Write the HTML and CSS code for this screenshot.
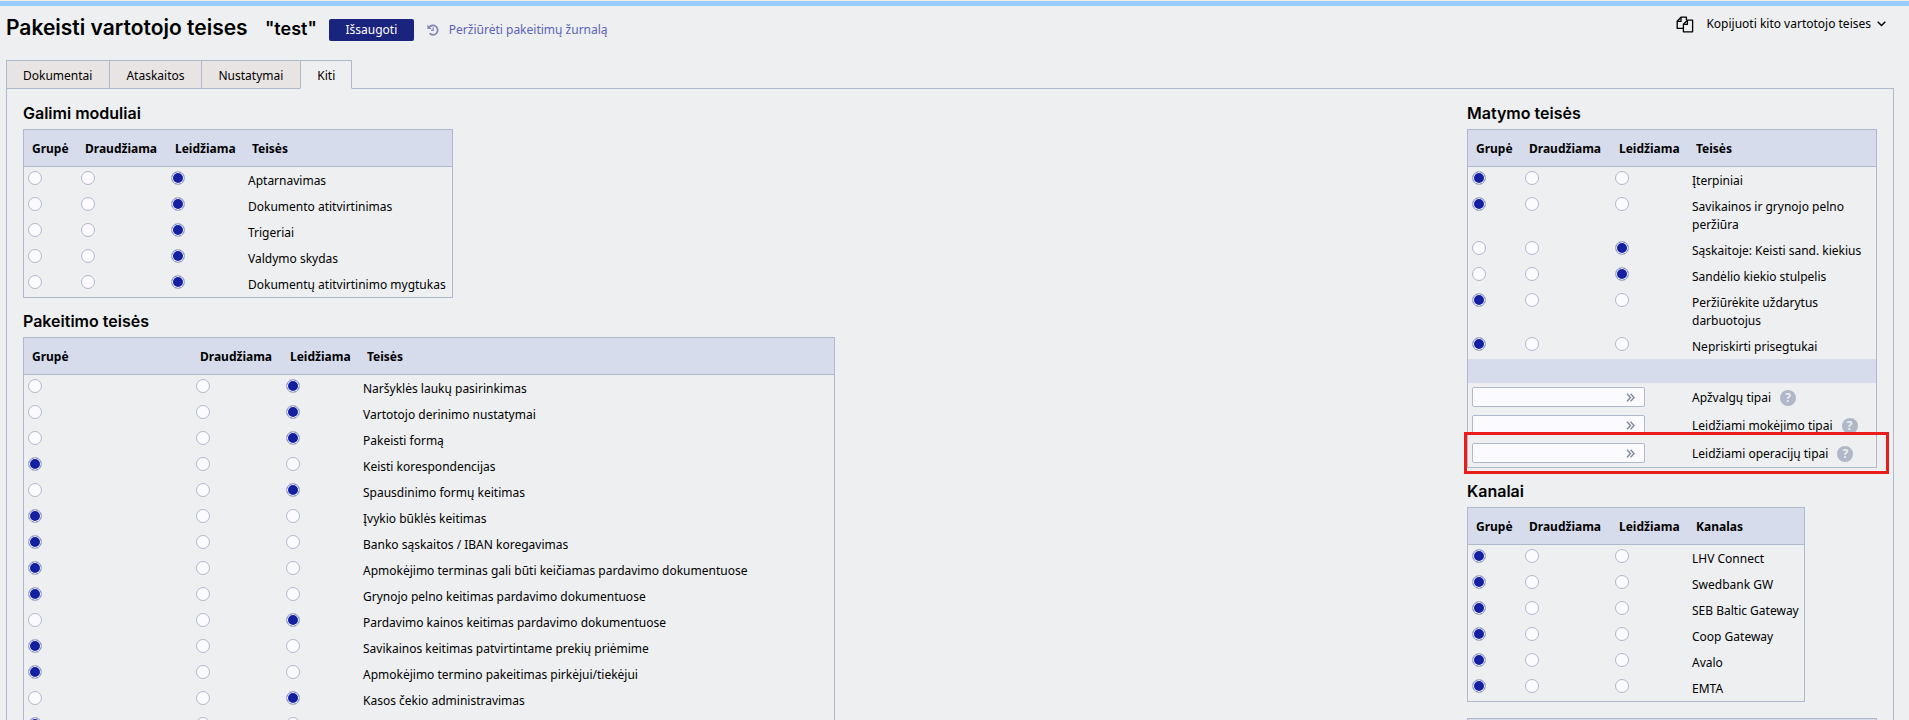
FILE: index.html
```html
<!DOCTYPE html>
<html lang="lt">

<head>
    <meta charset="UTF-8">
    <meta name="viewport" content="width=device-width, initial-scale=1.0">
    <title>Pakeisti vartotojo teises</title>
    <link rel="stylesheet" href="styles.css">
</head>

<body>
    <header class="pageHeader">
        <h1 class="pageTitle">Pakeisti vartotojo teises <span class="userName">"test"</span></h1>
        <button class="saveButton" type="button">Išsaugoti</button>
        <a class="logLink" href="#">
            <svg class="historyIcon" viewBox="0 0 12 12" width="12" height="12" aria-hidden="true">
                <path d="M2 3.6A4.7 4.7 0 1 1 2.6 9.4" fill="none" stroke="currentColor" stroke-width="1.8" />
                <path d="M0.4 0.8V5h4.2z" fill="currentColor" />
                <path d="M6.2 3.4v3h-2.2" fill="none" stroke="currentColor" stroke-width="1.3" />
            </svg>
            Peržiūrėti pakeitimų žurnalą
        </a>
        <button class="copyButton" type="button">
            <svg class="copyIcon" viewBox="0 0 18 17" width="18" height="17" aria-hidden="true">
                <g fill="none" stroke="currentColor" stroke-width="1.3" stroke-linejoin="round">
                    <path d="M7.4 12.4H1.2V5.2L5 1.2h5.4V4" />
                    <path d="M1.2 5.4H5V1.2" />
                    <path d="M7.4 8.2l4-4h5.2v11.6H7.4z" />
                    <path d="M7.4 8.4h4V4.2" />
                </g>
            </svg>
            Kopijuoti kito vartotojo teises
            <svg class="chevronIcon" viewBox="0 0 9 6" width="9" height="6" aria-hidden="true">
                <path d="M0.7 0.8l3.8 3.8 3.8-3.8" fill="none" stroke="currentColor" stroke-width="1.4" />
            </svg>
        </button>
    </header>

    <nav class="tabs">
        <a class="tab" href="#">Dokumentai</a>
        <a class="tab" href="#">Ataskaitos</a>
        <a class="tab" href="#">Nustatymai</a>
        <a class="tab active" href="#">Kiti</a>
    </nav>

    <main class="panel">
        <div class="column">
            <h2 class="sectionTitle">Galimi moduliai</h2>
            <table class="rights modules">
                <thead>
                    <tr><th class="group">Grupė</th><th class="deny">Draudžiama</th><th class="allow">Leidžiama</th><th>Teisės</th></tr>
                </thead>
                <tbody>
                    <tr>
                        <td><input type="radio" name="m1" aria-label="Aptarnavimas: Grupė"></td>
                        <td><input type="radio" name="m1" aria-label="Aptarnavimas: Draudžiama"></td>
                        <td><input type="radio" name="m1" aria-label="Aptarnavimas: Leidžiama" checked></td>
                        <td>Aptarnavimas</td>
                    </tr>
                    <tr>
                        <td><input type="radio" name="m2" aria-label="Dokumento atitvirtinimas: Grupė"></td>
                        <td><input type="radio" name="m2" aria-label="Dokumento atitvirtinimas: Draudžiama"></td>
                        <td><input type="radio" name="m2" aria-label="Dokumento atitvirtinimas: Leidžiama" checked></td>
                        <td>Dokumento atitvirtinimas</td>
                    </tr>
                    <tr>
                        <td><input type="radio" name="m3" aria-label="Trigeriai: Grupė"></td>
                        <td><input type="radio" name="m3" aria-label="Trigeriai: Draudžiama"></td>
                        <td><input type="radio" name="m3" aria-label="Trigeriai: Leidžiama" checked></td>
                        <td>Trigeriai</td>
                    </tr>
                    <tr>
                        <td><input type="radio" name="m4" aria-label="Valdymo skydas: Grupė"></td>
                        <td><input type="radio" name="m4" aria-label="Valdymo skydas: Draudžiama"></td>
                        <td><input type="radio" name="m4" aria-label="Valdymo skydas: Leidžiama" checked></td>
                        <td>Valdymo skydas</td>
                    </tr>
                    <tr>
                        <td><input type="radio" name="m5" aria-label="Dokumentų atitvirtinimo mygtukas: Grupė"></td>
                        <td><input type="radio" name="m5" aria-label="Dokumentų atitvirtinimo mygtukas: Draudžiama"></td>
                        <td><input type="radio" name="m5" aria-label="Dokumentų atitvirtinimo mygtukas: Leidžiama" checked></td>
                        <td>Dokumentų atitvirtinimo mygtukas</td>
                    </tr>
                </tbody>
            </table>

            <h2 class="sectionTitle">Pakeitimo teisės</h2>
            <table class="rights changes">
                <thead>
                    <tr><th class="group">Grupė</th><th class="deny">Draudžiama</th><th class="allow">Leidžiama</th><th>Teisės</th></tr>
                </thead>
                <tbody>
                    <tr>
                        <td><input type="radio" name="p1" aria-label="Naršyklės laukų pasirinkimas: Grupė"></td>
                        <td><input type="radio" name="p1" aria-label="Naršyklės laukų pasirinkimas: Draudžiama"></td>
                        <td><input type="radio" name="p1" aria-label="Naršyklės laukų pasirinkimas: Leidžiama" checked></td>
                        <td>Naršyklės laukų pasirinkimas</td>
                    </tr>
                    <tr>
                        <td><input type="radio" name="p2" aria-label="Vartotojo derinimo nustatymai: Grupė"></td>
                        <td><input type="radio" name="p2" aria-label="Vartotojo derinimo nustatymai: Draudžiama"></td>
                        <td><input type="radio" name="p2" aria-label="Vartotojo derinimo nustatymai: Leidžiama" checked></td>
                        <td>Vartotojo derinimo nustatymai</td>
                    </tr>
                    <tr>
                        <td><input type="radio" name="p3" aria-label="Pakeisti formą: Grupė"></td>
                        <td><input type="radio" name="p3" aria-label="Pakeisti formą: Draudžiama"></td>
                        <td><input type="radio" name="p3" aria-label="Pakeisti formą: Leidžiama" checked></td>
                        <td>Pakeisti formą</td>
                    </tr>
                    <tr>
                        <td><input type="radio" name="p4" aria-label="Keisti korespondencijas: Grupė" checked></td>
                        <td><input type="radio" name="p4" aria-label="Keisti korespondencijas: Draudžiama"></td>
                        <td><input type="radio" name="p4" aria-label="Keisti korespondencijas: Leidžiama"></td>
                        <td>Keisti korespondencijas</td>
                    </tr>
                    <tr>
                        <td><input type="radio" name="p5" aria-label="Spausdinimo formų keitimas: Grupė"></td>
                        <td><input type="radio" name="p5" aria-label="Spausdinimo formų keitimas: Draudžiama"></td>
                        <td><input type="radio" name="p5" aria-label="Spausdinimo formų keitimas: Leidžiama" checked></td>
                        <td>Spausdinimo formų keitimas</td>
                    </tr>
                    <tr>
                        <td><input type="radio" name="p6" aria-label="Įvykio būklės keitimas: Grupė" checked></td>
                        <td><input type="radio" name="p6" aria-label="Įvykio būklės keitimas: Draudžiama"></td>
                        <td><input type="radio" name="p6" aria-label="Įvykio būklės keitimas: Leidžiama"></td>
                        <td>Įvykio būklės keitimas</td>
                    </tr>
                    <tr>
                        <td><input type="radio" name="p7" aria-label="Banko sąskaitos / IBAN koregavimas: Grupė" checked></td>
                        <td><input type="radio" name="p7" aria-label="Banko sąskaitos / IBAN koregavimas: Draudžiama"></td>
                        <td><input type="radio" name="p7" aria-label="Banko sąskaitos / IBAN koregavimas: Leidžiama"></td>
                        <td>Banko sąskaitos / IBAN koregavimas</td>
                    </tr>
                    <tr>
                        <td><input type="radio" name="p8" aria-label="Apmokėjimo terminas: Grupė" checked></td>
                        <td><input type="radio" name="p8" aria-label="Apmokėjimo terminas: Draudžiama"></td>
                        <td><input type="radio" name="p8" aria-label="Apmokėjimo terminas: Leidžiama"></td>
                        <td>Apmokėjimo terminas gali būti keičiamas pardavimo dokumentuose</td>
                    </tr>
                    <tr>
                        <td><input type="radio" name="p9" aria-label="Grynojo pelno keitimas: Grupė" checked></td>
                        <td><input type="radio" name="p9" aria-label="Grynojo pelno keitimas: Draudžiama"></td>
                        <td><input type="radio" name="p9" aria-label="Grynojo pelno keitimas: Leidžiama"></td>
                        <td>Grynojo pelno keitimas pardavimo dokumentuose</td>
                    </tr>
                    <tr>
                        <td><input type="radio" name="p10" aria-label="Pardavimo kainos keitimas: Grupė"></td>
                        <td><input type="radio" name="p10" aria-label="Pardavimo kainos keitimas: Draudžiama"></td>
                        <td><input type="radio" name="p10" aria-label="Pardavimo kainos keitimas: Leidžiama" checked></td>
                        <td>Pardavimo kainos keitimas pardavimo dokumentuose</td>
                    </tr>
                    <tr>
                        <td><input type="radio" name="p11" aria-label="Savikainos keitimas: Grupė" checked></td>
                        <td><input type="radio" name="p11" aria-label="Savikainos keitimas: Draudžiama"></td>
                        <td><input type="radio" name="p11" aria-label="Savikainos keitimas: Leidžiama"></td>
                        <td>Savikainos keitimas patvirtintame prekių priėmime</td>
                    </tr>
                    <tr>
                        <td><input type="radio" name="p12" aria-label="Apmokėjimo termino pakeitimas: Grupė" checked></td>
                        <td><input type="radio" name="p12" aria-label="Apmokėjimo termino pakeitimas: Draudžiama"></td>
                        <td><input type="radio" name="p12" aria-label="Apmokėjimo termino pakeitimas: Leidžiama"></td>
                        <td>Apmokėjimo termino pakeitimas pirkėjui/tiekėjui</td>
                    </tr>
                    <tr>
                        <td><input type="radio" name="p13" aria-label="Kasos čekio administravimas: Grupė"></td>
                        <td><input type="radio" name="p13" aria-label="Kasos čekio administravimas: Draudžiama"></td>
                        <td><input type="radio" name="p13" aria-label="Kasos čekio administravimas: Leidžiama" checked></td>
                        <td>Kasos čekio administravimas</td>
                    </tr>
                    <tr>
                        <td><input type="radio" name="p14" aria-label="Grupė" checked></td>
                        <td><input type="radio" name="p14" aria-label="Draudžiama"></td>
                        <td><input type="radio" name="p14" aria-label="Leidžiama"></td>
                        <td></td>
                    </tr>
                </tbody>
            </table>
        </div>

        <div class="column side">
            <h2 class="sectionTitle">Matymo teisės</h2>
            <table class="rights viewing">
                <thead>
                    <tr><th class="group">Grupė</th><th class="deny">Draudžiama</th><th class="allow">Leidžiama</th><th>Teisės</th></tr>
                </thead>
                <tbody>
                    <tr>
                        <td><input type="radio" name="v1" aria-label="Įterpiniai: Grupė" checked></td>
                        <td><input type="radio" name="v1" aria-label="Įterpiniai: Draudžiama"></td>
                        <td><input type="radio" name="v1" aria-label="Įterpiniai: Leidžiama"></td>
                        <td>Įterpiniai</td>
                    </tr>
                    <tr>
                        <td><input type="radio" name="v2" aria-label="Savikainos peržiūra: Grupė" checked></td>
                        <td><input type="radio" name="v2" aria-label="Savikainos peržiūra: Draudžiama"></td>
                        <td><input type="radio" name="v2" aria-label="Savikainos peržiūra: Leidžiama"></td>
                        <td>Savikainos ir grynojo pelno peržiūra</td>
                    </tr>
                    <tr>
                        <td><input type="radio" name="v3" aria-label="Keisti sand. kiekius: Grupė"></td>
                        <td><input type="radio" name="v3" aria-label="Keisti sand. kiekius: Draudžiama"></td>
                        <td><input type="radio" name="v3" aria-label="Keisti sand. kiekius: Leidžiama" checked></td>
                        <td>Sąskaitoje: Keisti sand. kiekius</td>
                    </tr>
                    <tr>
                        <td><input type="radio" name="v4" aria-label="Sandėlio kiekio stulpelis: Grupė"></td>
                        <td><input type="radio" name="v4" aria-label="Sandėlio kiekio stulpelis: Draudžiama"></td>
                        <td><input type="radio" name="v4" aria-label="Sandėlio kiekio stulpelis: Leidžiama" checked></td>
                        <td>Sandėlio kiekio stulpelis</td>
                    </tr>
                    <tr>
                        <td><input type="radio" name="v5" aria-label="Uždaryti darbuotojai: Grupė" checked></td>
                        <td><input type="radio" name="v5" aria-label="Uždaryti darbuotojai: Draudžiama"></td>
                        <td><input type="radio" name="v5" aria-label="Uždaryti darbuotojai: Leidžiama"></td>
                        <td>Peržiūrėkite uždarytus darbuotojus</td>
                    </tr>
                    <tr>
                        <td><input type="radio" name="v6" aria-label="Nepriskirti prisegtukai: Grupė" checked></td>
                        <td><input type="radio" name="v6" aria-label="Nepriskirti prisegtukai: Draudžiama"></td>
                        <td><input type="radio" name="v6" aria-label="Nepriskirti prisegtukai: Leidžiama"></td>
                        <td>Nepriskirti prisegtukai</td>
                    </tr>
                    <tr class="divider"><td colspan="4"></td></tr>
                    <tr class="typeRow">
                        <td colspan="3">
                            <div class="picker"><input type="text" id="reviewTypes"><button type="button" aria-label="Pasirinkti">
                                <svg viewBox="0 0 9 9" width="9" height="9"><path d="M1 .7l3.5 3.8L1 8.3M4.6.7l3.5 3.8-3.5 3.8" /></svg>
                            </button></div>
                        </td>
                        <td><div class="typeLabel"><label for="reviewTypes">Apžvalgų tipai</label><span class="help">?</span></div></td>
                    </tr>
                    <tr class="typeRow">
                        <td colspan="3">
                            <div class="picker"><input type="text" id="paymentTypes"><button type="button" aria-label="Pasirinkti">
                                <svg viewBox="0 0 9 9" width="9" height="9"><path d="M1 .7l3.5 3.8L1 8.3M4.6.7l3.5 3.8-3.5 3.8" /></svg>
                            </button></div>
                        </td>
                        <td><div class="typeLabel"><label for="paymentTypes">Leidžiami mokėjimo tipai</label><span class="help">?</span></div></td>
                    </tr>
                    <tr class="typeRow highlighted">
                        <td colspan="3">
                            <div class="picker"><input type="text" id="operationTypes"><button type="button" aria-label="Pasirinkti">
                                <svg viewBox="0 0 9 9" width="9" height="9"><path d="M1 .7l3.5 3.8L1 8.3M4.6.7l3.5 3.8-3.5 3.8" /></svg>
                            </button></div>
                        </td>
                        <td><div class="typeLabel"><label for="operationTypes">Leidžiami operacijų tipai</label><span class="help">?</span></div></td>
                    </tr>
                </tbody>
            </table>

            <h2 class="sectionTitle">Kanalai</h2>
            <table class="rights channels">
                <thead>
                    <tr><th class="group">Grupė</th><th class="deny">Draudžiama</th><th class="allow">Leidžiama</th><th>Kanalas</th></tr>
                </thead>
                <tbody>
                    <tr>
                        <td><input type="radio" name="k1" aria-label="LHV Connect: Grupė" checked></td>
                        <td><input type="radio" name="k1" aria-label="LHV Connect: Draudžiama"></td>
                        <td><input type="radio" name="k1" aria-label="LHV Connect: Leidžiama"></td>
                        <td>LHV Connect</td>
                    </tr>
                    <tr>
                        <td><input type="radio" name="k2" aria-label="Swedbank GW: Grupė" checked></td>
                        <td><input type="radio" name="k2" aria-label="Swedbank GW: Draudžiama"></td>
                        <td><input type="radio" name="k2" aria-label="Swedbank GW: Leidžiama"></td>
                        <td>Swedbank GW</td>
                    </tr>
                    <tr>
                        <td><input type="radio" name="k3" aria-label="SEB Baltic Gateway: Grupė" checked></td>
                        <td><input type="radio" name="k3" aria-label="SEB Baltic Gateway: Draudžiama"></td>
                        <td><input type="radio" name="k3" aria-label="SEB Baltic Gateway: Leidžiama"></td>
                        <td>SEB Baltic Gateway</td>
                    </tr>
                    <tr>
                        <td><input type="radio" name="k4" aria-label="Coop Gateway: Grupė" checked></td>
                        <td><input type="radio" name="k4" aria-label="Coop Gateway: Draudžiama"></td>
                        <td><input type="radio" name="k4" aria-label="Coop Gateway: Leidžiama"></td>
                        <td>Coop Gateway</td>
                    </tr>
                    <tr>
                        <td><input type="radio" name="k5" aria-label="Avalo: Grupė" checked></td>
                        <td><input type="radio" name="k5" aria-label="Avalo: Draudžiama"></td>
                        <td><input type="radio" name="k5" aria-label="Avalo: Leidžiama"></td>
                        <td>Avalo</td>
                    </tr>
                    <tr>
                        <td><input type="radio" name="k6" aria-label="EMTA: Grupė" checked></td>
                        <td><input type="radio" name="k6" aria-label="EMTA: Draudžiama"></td>
                        <td><input type="radio" name="k6" aria-label="EMTA: Leidžiama"></td>
                        <td>EMTA</td>
                    </tr>
                </tbody>
            </table>

            <div class="nextSection"></div>
        </div>
    </main>
</body>

</html>
```

FILE: styles.css
```css
* {
    margin: 0;
    padding: 0;
    box-sizing: border-box;
}

html {
    height: 100vh;
    border-top: 1px solid #f0efea;
}

body {
    height: 100%;
    overflow: hidden;
    display: flex;
    flex-direction: column;
    padding: 0 15px 0 6px;
    border-top: 5px solid #99ccff;
    background-color: #edeff1;
    color: #000;
    font-family: "Noto Sans", sans-serif;
    font-size: 12px;
    line-height: 18px;
}

/* header */
.pageHeader {
    display: flex;
    align-items: center;
    height: 48px;
    flex-shrink: 0;
}

.pageTitle {
    padding-bottom: 3px;
    font-family: Inter, sans-serif;
    font-size: 21px;
    font-weight: 600;
    line-height: 24px;
}

.userName {
    margin-left: 12px;
    font-size: 18px;
}

.saveButton {
    width: 85px;
    height: 22px;
    margin-left: 12px;
    border: none;
    border-radius: 2px;
    background-color: #1a237e;
    color: #fff;
    font: inherit;
    cursor: pointer;
}

.logLink {
    display: flex;
    align-items: center;
    gap: 10px;
    margin-left: 13px;
    color: #5c62b8;
    text-decoration: none;
}

.historyIcon {
    color: #8388be;
}

.copyButton {
    display: flex;
    align-items: center;
    margin: 0 8px 12px auto;
    border: none;
    background: none;
    color: #000;
    font: inherit;
    cursor: pointer;
}

.copyIcon {
    margin-right: 12px;
}

.chevronIcon {
    margin-left: 6px;
}

/* tabs */
.tabs {
    display: flex;
    flex-shrink: 0;
    margin-top: 6px;
}

.tab {
    height: 29px;
    padding: 0 17px 0 16px;
    border: 1px solid #b0b8cc;
    border-right: none;
    background-color: #e8e4e3;
    color: #000;
    line-height: 29px;
    text-decoration: none;
}

.tab.active {
    padding-right: 16px;
    border-right: 1px solid #b0b8cc;
    border-bottom-color: #edeff1;
    background-color: #edeff1;
    position: relative;
}

.panel {
    display: flex;
    justify-content: space-between;
    flex: 1 0 auto;
    margin-top: -1px;
    padding: 1px 16px 0;
    border: 1px solid #b0b8cc;
}

.sectionTitle {
    margin: 13px 0 6px;
    font-family: Inter, sans-serif;
    font-size: 16px;
    font-weight: 600;
    line-height: 20px;
}

/* tables of rights */
.rights {
    border: 1px solid #b0b8cc;
    border-spacing: 0;
    table-layout: fixed;
}

.rights th {
    height: 37px;
    padding: 2px 8px 0;
    border-bottom: 1px solid #b0b8cc;
    background-color: #d6dcec;
    font-weight: bold;
    text-align: left;
}

.rights td {
    padding: 4px;
    vertical-align: top;
}

.rights td:last-child {
    padding: 5px 4px 3px;
}

.group {
    width: 53px;
}

.deny {
    width: 90px;
}

.allow {
    width: 77px;
}

.modules {
    width: 430px;
}

.changes {
    width: 812px;
}

.changes .group {
    width: 168px;
}

.side {
    width: 410px;
}

.viewing {
    width: 100%;
}

.channels {
    width: 338px;
    white-space: nowrap;
}

input[type="radio"] {
    display: block;
    width: 14px;
    height: 14px;
    appearance: none;
    border: 1px solid #b0b8cc;
    border-radius: 50%;
    background-color: #fafaff;
}

input[type="radio"]:checked {
    background-color: #1420a0;
    box-shadow: inset 0 0 0 1px #fafaff;
}

.rights .divider td {
    height: 24px;
    background-color: #d6dcec;
}

.viewing tr:not(.divider):not(.typeRow) td:last-child {
    padding-right: 12px;
}

.picker {
    display: flex;
    width: 173px;
    height: 20px;
    border: 1px solid #b0b8cc;
    border-radius: 2px;
    background-color: #fafaff;
}

.picker input {
    flex: 1;
    min-width: 0;
    padding: 0 4px;
    border: none;
    outline: none;
    background: none;
    font: inherit;
}

.picker button {
    display: flex;
    align-items: center;
    padding: 0 9px;
    border: none;
    background: none;
    cursor: pointer;
}

.picker path {
    fill: none;
    stroke: #8088a0;
    stroke-width: 1.4;
}

.typeLabel {
    display: flex;
    align-items: center;
    gap: 9px;
    height: 20px;
    white-space: nowrap;
}

.help {
    flex-shrink: 0;
    width: 16px;
    height: 16px;
    border-radius: 50%;
    background-color: #b0b8c8;
    color: #edeff1;
    font-weight: bold;
    line-height: 16px;
    text-align: center;
}

.highlighted {
    position: relative;
}

/* red frame over the operation types row */
.highlighted td:last-child::after {
    content: "";
    position: absolute;
    top: -7px;
    right: -13px;
    bottom: -7px;
    left: -4px;
    border: 3px solid #ea1c1c;
    pointer-events: none;
}

.nextSection {
    height: 38px;
    margin-top: 16px;
    border: 1px solid #b0b8cc;
    background-color: #d6dcec;
}
```
